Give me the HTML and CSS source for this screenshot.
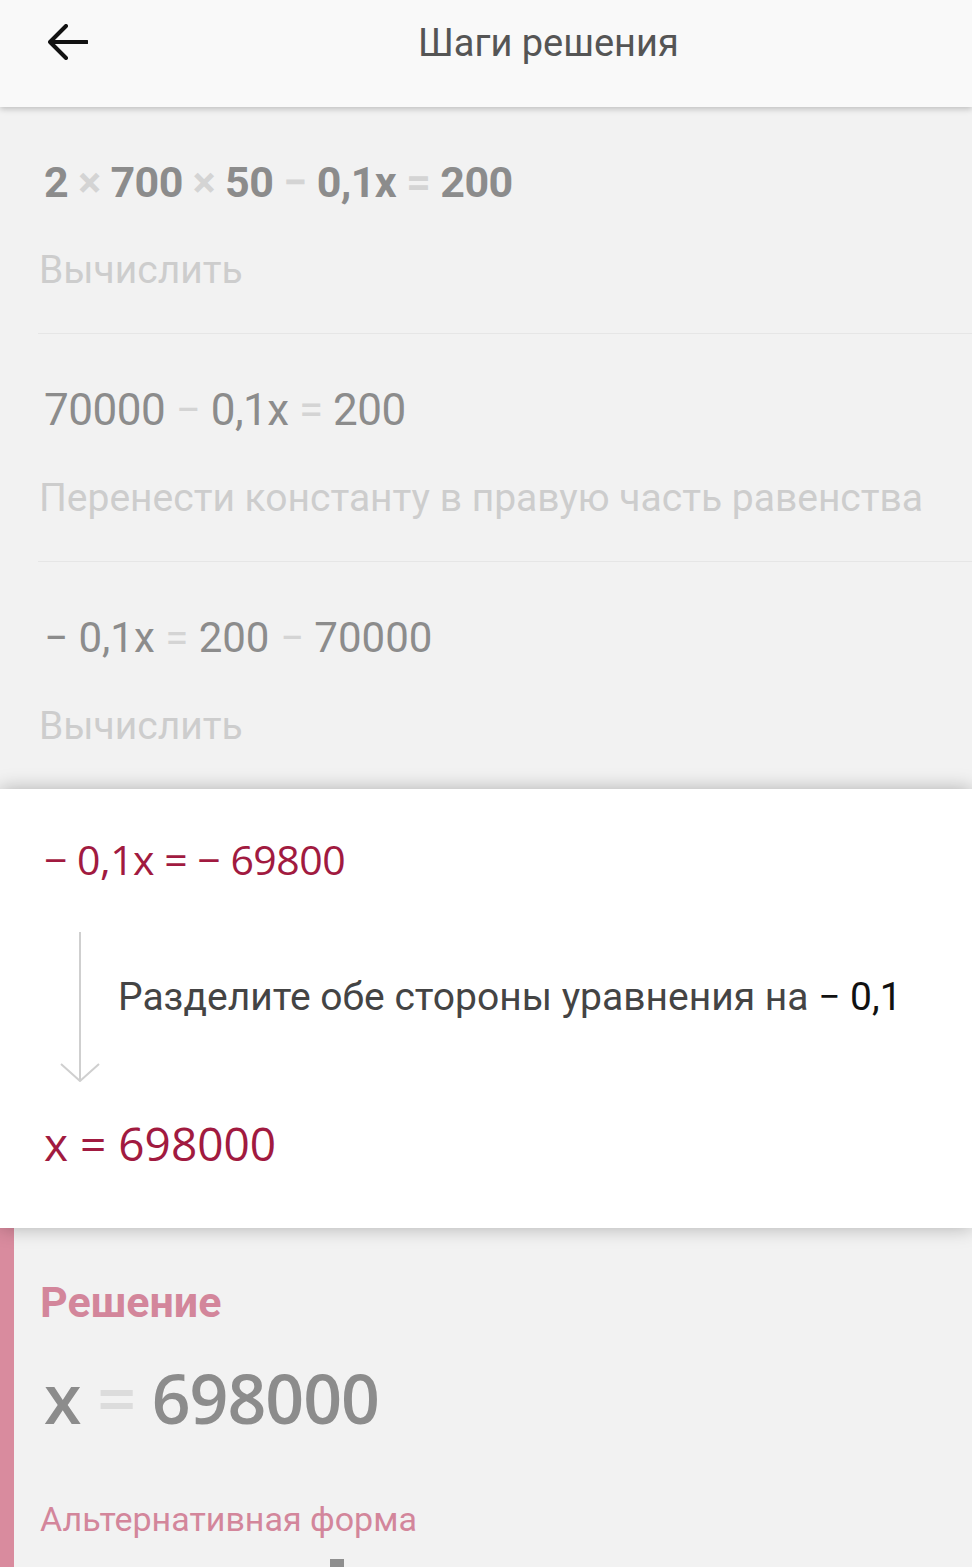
FILE: index.html
```html
<!DOCTYPE html>
<html lang="ru">
<head>
<meta charset="utf-8">
<title>Шаги решения</title>
<link rel="stylesheet" href="styles.css">
</head>
<body>
<header class="topbar">
  <svg class="back" width="40" height="36" viewBox="0 0 40 36" aria-hidden="true">
    <path d="M2 18 H39 M18 2 L2 18 L18 34" fill="none" stroke="#111" stroke-width="4" stroke-linecap="round" stroke-linejoin="round"/>
  </svg>
  <h1 class="title">Шаги решения</h1>
</header>

<main class="steps">
  <section class="step">
    <div class="eq eq-bold">2 <span class="op">×</span> 700 <span class="op">×</span> 50 <span class="op">−</span> 0,1x <span class="op">=</span> 200</div>
    <div class="desc">Вычислить</div>
  </section>
  <section class="step">
    <div class="eq eq-tight">70000 <span class="op">−</span> 0,1x <span class="op">=</span> 200</div>
    <div class="desc">Перенести константу в правую часть равенства</div>
  </section>
  <section class="step step-last">
    <div class="eq eq-small">− 0,1x <span class="op">=</span> 200 <span class="op">−</span> 70000</div>
    <div class="desc">Вычислить</div>
  </section>

  <section class="card">
    <div class="card-eq card-eq-top">− 0,1x = − 69800</div>
    <div class="card-step">
      <svg class="down" width="40" height="150" viewBox="0 0 40 150" aria-hidden="true">
        <path d="M20 0 V149 M1 132 L20 149 L39 132" fill="none" stroke="#cfcfcf" stroke-width="2"/>
      </svg>
      <div class="card-text">Разделите обе стороны уравнения на <span class="num">− 0,1</span></div>
    </div>
    <div class="card-eq card-eq-bottom">x = 698000</div>
  </section>

  <section class="solution">
    <h2 class="sol-title">Решение</h2>
    <div class="sol-eq">x <span class="op">=</span> 698000</div>
    <div class="alt">Альтернативная форма</div>
    <div class="alt-next"><span class="stub"></span></div>
  </section>
</main>
</body>
</html>
```

FILE: styles.css
```css
* { box-sizing: border-box; }
html, body { margin: 0; padding: 0; }
body {
  background: #f2f2f2;
  font-family: Roboto, "Noto Sans", sans-serif;
  width: 972px;
  height: 1567px;
  overflow: hidden;
}

.topbar {
  position: relative;
  z-index: 2;
  height: 107px;
  background: #f9f9f9;
  box-shadow: 0 2px 6px rgba(0, 0, 0, 0.22);
  display: flex;
  align-items: center;
  padding-left: 48px;
}
.back { display: block; margin-top: -24px; }
.title {
  margin: -22px 0 0 330px;
  font-weight: 400;
  font-size: 38px;
  color: #555;
  line-height: 50px;
}

.steps { display: flex; flex-direction: column; }

.step {
  margin-left: 38px;
  padding: 45px 0 38px 6px;
  border-bottom: 1px solid #e6e6e6;
  display: flex;
  flex-direction: column;
  gap: 33px;
}
.step + .step { padding-top: 46px; }
.step-last { border-bottom: none; padding-bottom: 38px; }

.eq {
  font-size: 44px;
  line-height: 60px;
  color: #8c8c8c;
  white-space: nowrap;
}
.eq-bold { font-size: 43px; letter-spacing: -0.6px; }
.eq-bold { font-weight: 700; }
.eq-tight { letter-spacing: -0.5px; }
.eq-small { font-size: 42px; }
.op { color: #d4d4d4; }
.desc {
  font-size: 39px;
  line-height: 50px;
  color: #cdcdcd;
  margin-left: -5px;
}

.card {
  position: relative;
  z-index: 1;
  background: #fff;
  box-shadow: 0 0 18px rgba(0, 0, 0, 0.28);
  height: 439px;
  padding: 42px 0 0 44px;
}
.card-eq {
  font-family: "Open Sans", sans-serif;
  color: #a11a40;
  white-space: nowrap;
}
.card-eq-top { font-size: 41px; line-height: 56px; letter-spacing: -0.5px; }
.card-eq-bottom { font-size: 46px; line-height: 60px; }
.card-step {
  display: flex;
  align-items: center;
  gap: 18px;
  padding: 45px 0 31px 16px;
}
.down { display: block; flex: none; }
.card-text {
  font-size: 39px;
  line-height: 50px;
  color: #444;
  white-space: nowrap;
  margin-top: -20px;
}
.card-text .num { color: #111; }

.solution {
  flex: 1;
  border-left: 14px solid #d98b9e;
  padding: 49px 0 0 26px;
  height: 340px;
}
.sol-title {
  margin: 0;
  font-size: 43px;
  font-weight: 700;
  line-height: 50px;
  color: #d3869b;
}
.sol-eq {
  margin-top: 31px;
  margin-left: 4px;
  font-family: "Open Sans", sans-serif;
  font-size: 68px;
  line-height: 80px;
  font-weight: 600;
  color: #8c8c8c;
  letter-spacing: -1px;
}
.sol-eq .op { color: #dcdcdc; }
.alt {
  margin-top: 58px;
  font-size: 34px;
  line-height: 46px;
  color: #d3869b;
}
.alt-next { padding: 17px 0 0 290px; }
.stub { display: block; width: 14px; height: 10px; background: #8f8f8f; }
```
